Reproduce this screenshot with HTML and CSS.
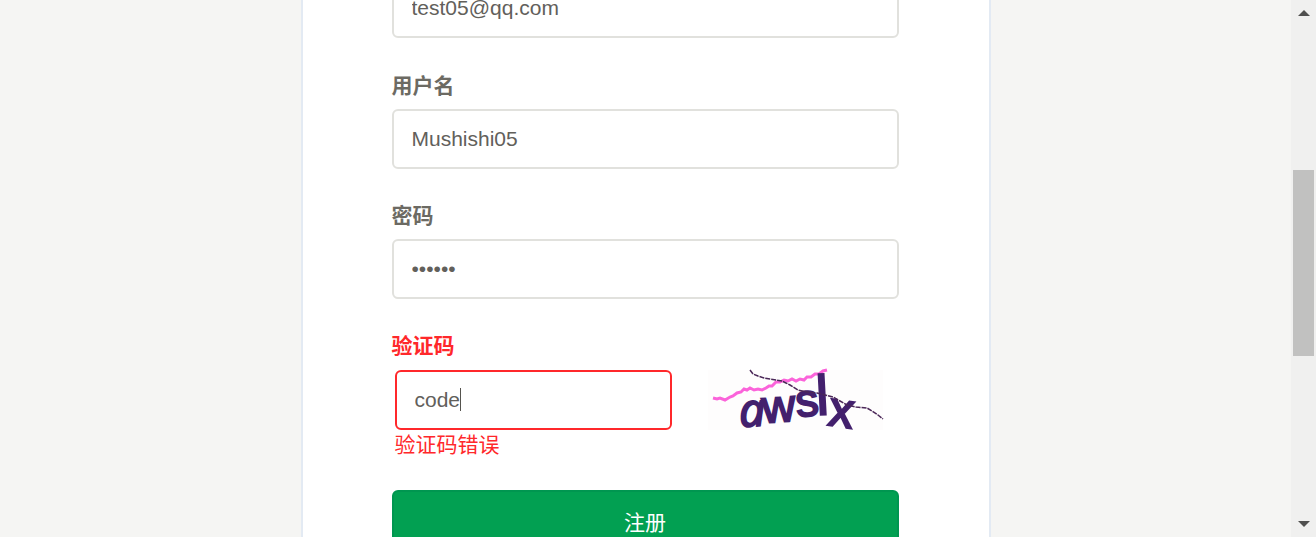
FILE: index.html
```html
<!DOCTYPE html>
<html lang="zh-CN">
<head>
<meta charset="utf-8">
<title>注册</title>
<link rel="stylesheet" href="styles.css">
</head>
<body>
<div class="window">
  <main class="page">
    <form class="card">
      <div class="field field-first">
        <input class="input" type="email" aria-label="邮箱" value="test05@qq.com">
      </div>
      <div class="field">
        <label class="label" for="username">用户名</label>
        <input class="input" id="username" type="text" value="Mushishi05">
      </div>
      <div class="field">
        <label class="label" for="password">密码</label>
        <input class="input" id="password" type="password" value="123456">
      </div>
      <div class="field field-error">
        <label class="label" for="captcha">验证码</label>
        <div class="captcha-row">
          <div class="captcha-entry">
            <input class="input" id="captcha" type="text" value="code" aria-describedby="captcha-error">
            <span class="caret"></span>
            <p class="message" id="captcha-error">验证码错误</p>
          </div>
          <svg class="captcha-image" width="180" height="60" viewBox="0 0 180 60" role="img" aria-label="验证码图片">
            <rect width="175" height="60" fill="#fefdfd"/>
            <path d="M5 28L9 29L12 28L17 30L22 27L25 26L29 23L33 22L36 19L39 20L42 18L46 20L50 19L54 20L58 18L61 16L64 16L68 12L72 12L76 10L80 11L84 9L88 11L92 9L96 10L99 7L103 7L107 4L111 4L115 1L119 0" fill="none" stroke="#fb63da" stroke-width="3"/>
            <g class="captcha-text">
              <text class="captcha-slanted" transform="translate(32 57) rotate(-4)">a</text>
              <text transform="translate(55 53) rotate(-4)">w</text>
              <text transform="translate(89 47) rotate(-6)">s</text>
              <text class="captcha-tall" transform="translate(109 45) rotate(-3)">l</text>
              <text class="captcha-large" transform="translate(119 55) rotate(8)">x</text>
            </g>
            <path d="M42 0L45 4L50 6L56 8L62 9L68 10L74 11L78 13L82 15L90 20L99 22L109 23L117 25L125 27L132 31L139 35L148 37L159 38L164 41L170 45L175 49" fill="none" stroke="#4b2758" stroke-width="1.5" stroke-dasharray="5 1"/>
          </svg>
        </div>
      </div>
      <button class="submit" type="button">注册</button>
    </form>
  </main>
  <div class="scrollbar" aria-hidden="true">
    <svg class="arrow" width="12" height="6" viewBox="0 0 12 6"><path d="M0 6L6 0L12 6Z"/></svg>
    <div class="track"><div class="thumb"></div></div>
    <svg class="arrow" width="12" height="6" viewBox="0 0 12 6"><path d="M0 0H12L6 6Z"/></svg>
  </div>
</div>
</body>
</html>
```

FILE: styles.css
```css
* {
  box-sizing: border-box;
}

body {
  margin: 0;
  background: #f5f5f3;
  color: #666460;
  font-family: "Liberation Sans", "Noto Sans CJK SC", sans-serif;
  font-size: 21px;
}

.window {
  display: flex;
  height: 100vh;
  overflow: hidden;
}

.page {
  flex: 1;
  min-width: 0;
}

.card {
  max-width: 690px;
  margin: 0 auto;
  padding: 0 90px 48px 89px;
  background: #fff;
  border: solid #e3eaf3;
  border-width: 0 2px;
}

.field {
  display: flex;
  flex-direction: column;
  gap: 8px;
  margin-bottom: 32px;
}

.field-first {
  margin-top: -22px;
  margin-bottom: 33px;
}

.label {
  font-weight: 700;
  line-height: 30px;
  color: #6c6a63;
}

.input {
  display: block;
  width: 100%;
  height: 60px;
  padding: 0 18px;
  border: 2px solid #e1e1dd;
  border-radius: 6px;
  background: #fff;
  color: #62605b;
  font: inherit;
  outline: none;
}

.field-error {
  margin-bottom: 30px;
}

.field-error .label {
  color: #ff282b;
}

.field-error .input {
  border-color: #ff282b;
}

.captcha-row {
  display: flex;
  justify-content: space-between;
  padding: 1px 11px 0 3px;
}

.captcha-entry {
  position: relative;
  width: 277px;
}

.caret {
  position: absolute;
  left: 65px;
  top: 18px;
  width: 1px;
  height: 23px;
  background: #55534e;
}

.message {
  margin: 0;
  color: #ff282b;
  line-height: 30px;
}

.captcha-image {
  flex: none;
  overflow: visible;
}

.captcha-text {
  fill: #43206d;
  stroke: #43206d;
  stroke-width: 2px;
  font-family: "Liberation Sans", sans-serif;
  font-size: 46px;
}

.captcha-slanted {
  font-family: "Open Sans", sans-serif;
  font-style: italic;
}

.captcha-tall {
  font-size: 56px;
}

.captcha-large {
  font-size: 50px;
}

.submit {
  display: block;
  width: 100%;
  height: 62px;
  border: 2px solid #009650;
  border-radius: 6px;
  background: #02a052;
  color: #fff;
  font: inherit;
}

.scrollbar {
  display: flex;
  flex-direction: column;
  align-items: center;
  width: 25px;
  padding: 10px 0;
  background: #f0f0ef;
}

.arrow {
  fill: #50504f;
}

.track {
  flex: 1;
  width: 21px;
  padding-top: 154px;
}

.thumb {
  height: 186px;
  background: #c1c1c0;
}
```
